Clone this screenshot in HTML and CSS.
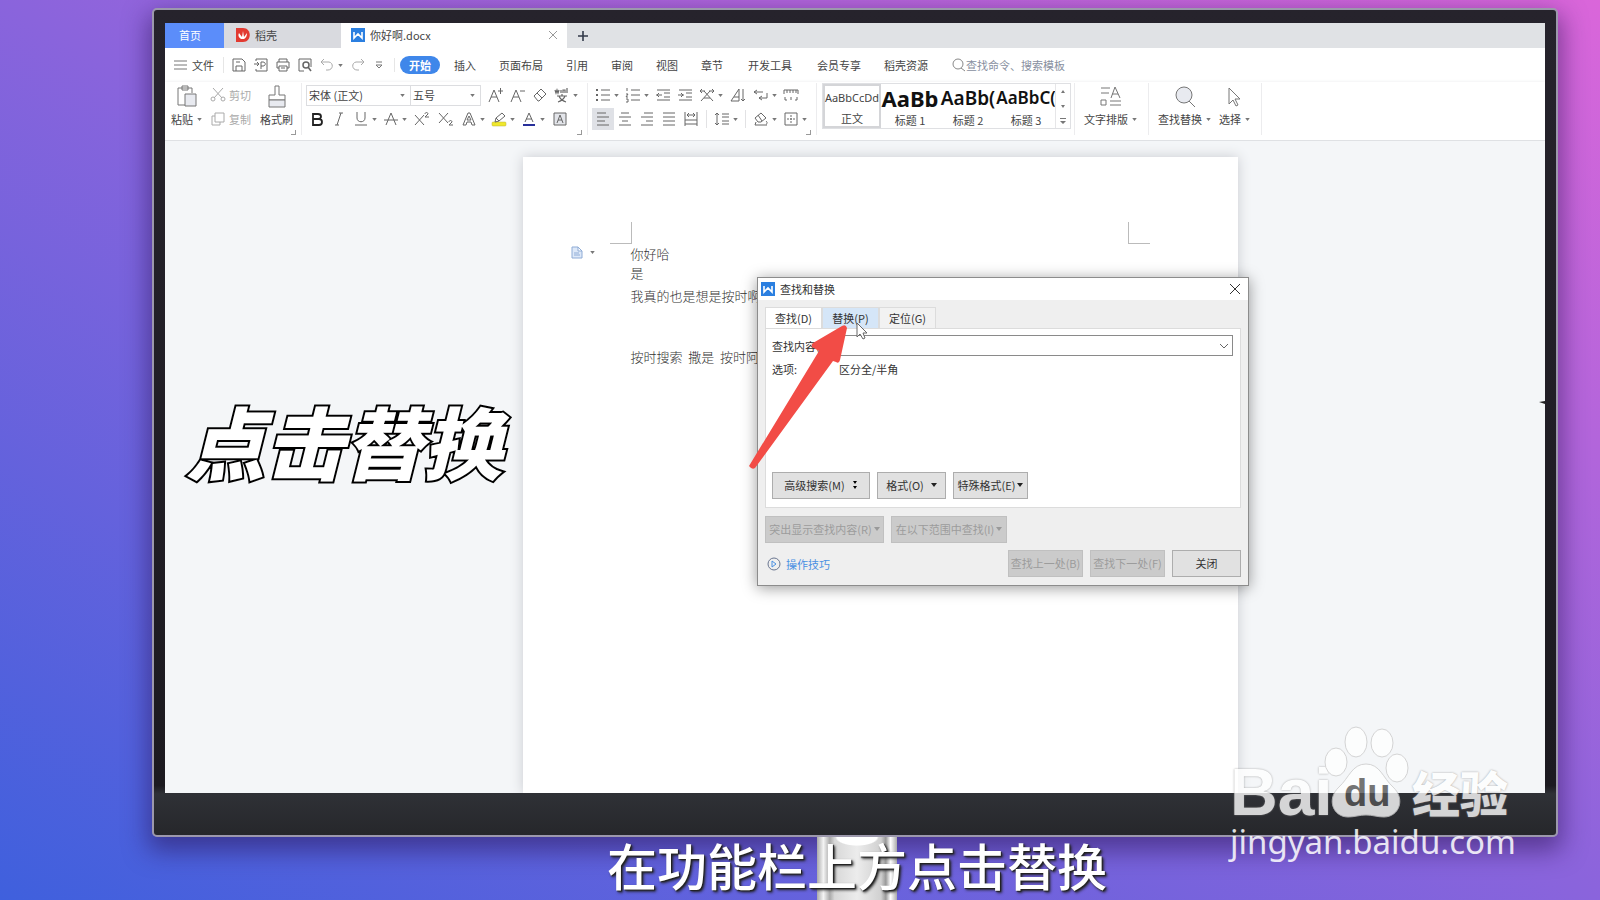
FILE: index.html
```html
<!DOCTYPE html>
<html lang="zh-CN">
<head>
<meta charset="utf-8">
<title>你好啊.docx</title>
<link rel="stylesheet" href="styles.css">
</head>
<body>
<svg class="defs" aria-hidden="true">
  <symbol id="caret" viewBox="0 0 6 4"><path d="M0 0h6L3 4z" fill="currentColor"/></symbol>
  <symbol id="wlogo" viewBox="0 0 14 14"><rect width="14" height="14" fill="#2b7fe0"/><path d="M3 4v6l4-4 4 4V4" fill="none" stroke="#fff" stroke-width="1.6"/></symbol>
</svg>

<main class="monitor">
  <div class="screen">
    <nav class="tabbar">
      <button class="tab home">首页</button>
      <button class="tab docer">
        <svg width="14" height="14" viewBox="0 0 14 14"><path d="M0 0h7c9 0 9 14 0 14H0z" fill="#e23a31"/><path d="M5 11C2 9 2 7 3 5l3 4 1-6 1 6 3-4c0 3-1 5-3 6z" fill="#fff"/></svg>
        稻壳</button>
      <div class="tab doc">
        <svg width="14" height="14"><use href="#wlogo"/></svg>
        <span>你好啊.docx</span>
        <button class="tab-close" aria-label="关闭标签"><svg width="10" height="10" viewBox="0 0 10 10"><path d="M1 1l8 8M9 1l-8 8" stroke="#999" fill="none"/></svg></button>
      </div>
      <button class="tab-add" aria-label="新建"><svg width="12" height="12" viewBox="0 0 12 12"><path d="M6 1v10M1 6h10" stroke="#333a4a" stroke-width="1.6"/></svg></button>
    </nav>

    <div class="menubar">
      <button class="file"><svg width="13" height="10" viewBox="0 0 13 10"><path d="M0 1h13M0 5h13M0 9h13" stroke="#777"/></svg>文件</button>
      <div class="quick">
        <button aria-label="保存"><svg class="ic" viewBox="0 0 14 14"><path d="M1 1h9l3 3v9H1zM4 13V8h6v5M4 4h4"/></svg></button>
        <button aria-label="输出为PDF"><svg class="ic" viewBox="0 0 14 14"><path d="M2 3V1h11v12H2v-2M0 6h5M3 4l2 2-2 2M7 11V4h2c3 0 3 4 0 4H7"/></svg></button>
        <button aria-label="打印"><svg class="ic" viewBox="0 0 14 14"><path d="M3 4V1h8v3M3 10H1V4h12v6h-2M3 8h8v5H3zM5 10h4"/></svg></button>
        <button aria-label="打印预览"><svg class="ic" viewBox="0 0 14 14"><path d="M6 13H1V1h12v8"/><circle cx="8" cy="7" r="3" stroke-width="1.5"/><path d="M10 9l3 4" stroke-width="1.5"/></svg></button>
        <button class="pair dim" aria-label="撤销"><svg class="ic" viewBox="0 0 14 14"><path d="M4 1L1 4l3 3M1 4h8c5 1 4 8-1 8H6"/></svg><svg class="cr"><use href="#caret"/></svg></button>
        <button class="dim" aria-label="恢复"><svg class="ic" viewBox="0 0 14 14"><path d="M10 1l3 3-3 3M13 4H5c-5 1-4 8 1 8h2"/></svg></button>
        <button class="custom" aria-label="自定义"><svg width="8" height="8" viewBox="0 0 8 8"><path d="M1 1h6M1 4h6L4 7z" fill="none" stroke="#777"/></svg></button>
      </div>
      <nav class="menus">
        <button class="current">开始</button><button>插入</button><button>页面布局</button><button>引用</button><button>审阅</button><button>视图</button><button>章节</button><button class="far">开发工具</button><button class="far">会员专享</button><button>稻壳资源</button>
      </nav>
      <label class="search"><svg width="14" height="14" viewBox="0 0 14 14" fill="none" stroke="#888"><circle cx="6" cy="6" r="5"/><path d="M9 10l4 3"/></svg><input type="text" placeholder="查找命令、搜索模板" aria-label="查找命令、搜索模板"></label>
    </div>

    <div class="ribbon">
      <section class="group clip">
        <button class="big"><svg width="22" height="24" viewBox="0 0 22 24" fill="none" stroke="#777"><path d="M9 20H2V3h14v5M6 1h6v4H6z"/><path d="M9 9h11v12H9z" fill="#e8eaf0"/></svg><span>粘贴<svg class="cr"><use href="#caret"/></svg></span></button>
        <div class="stack">
          <button class="dim"><svg class="ic" viewBox="0 0 14 14"><path d="M2 0l9 10M12 0L3 10"/><circle cx="2" cy="11" r="2"/><circle cx="12" cy="11" r="2"/></svg>剪切</button>
          <button class="dim"><svg class="ic" viewBox="0 0 14 14"><path d="M4 1h9v9H4zM4 4H1v9h8v-3"/></svg>复制</button>
        </div>
        <button class="big"><svg width="20" height="24" viewBox="0 0 20 24" fill="none" stroke="#777"><path d="M8 1h4v9h6v5H2v-5h6z"/><path d="M2 15h16v7H2z" fill="#e8eaf0"/></svg><span>格式刷</span></button>
        <i class="corner"></i>
      </section>

      <section class="group font">
        <div class="row">
          <div class="combo family"><select aria-label="字体"><option>宋体 (正文)</option></select><svg class="cr"><use href="#caret"/></svg></div>
          <div class="combo size"><select aria-label="字号"><option>五号</option></select><svg class="cr"><use href="#caret"/></svg></div>
          <button class="t" aria-label="增大字号"><svg class="ic" viewBox="0 0 14 14"><path d="M0 14L5 2l5 12M2 9h6M9 3h5M11.500 0v6"/></svg></button>
          <button class="t" aria-label="减小字号"><svg class="ic" viewBox="0 0 14 14"><path d="M0 14L5 2l5 12M2 9h6M9 3h5"/></svg></button>
          <button class="t" aria-label="清除格式"><svg class="ic" viewBox="0 0 14 14"><path d="M1 8l7-7 5 5-7 7H5zM4 5l5 5"/></svg></button>
          <button class="t pair" aria-label="拼音指南"><svg class="ic" viewBox="0 0 14 14"><path d="M0 2l1 3 1-3 1 3 1-3M6 2v3M8 5V2h2v3M12 0v5M2 8h10M7 6v2M4 8c1 3 4 5 7 6M10 8c-1 3-4 5-7 6" stroke-width="1.200"/></svg><svg class="cr"><use href="#caret"/></svg></button>
        </div>
        <div class="row">
          <button class="t" aria-label="加粗"><svg class="ic" viewBox="0 0 14 14"><path d="M3 2h5c4 0 4 5 0 5H3zM3 7h6c4 0 4 6 0 6H3z" stroke="#222" stroke-width="1.800"/></svg></button>
          <button class="t" aria-label="倾斜"><svg class="ic" viewBox="0 0 14 14"><path d="M7 1h4M3 13h4M9 1L5 13"/></svg></button>
          <button class="t pair" aria-label="下划线"><svg class="ic" viewBox="0 0 14 14"><path d="M3 0v6c0 5 8 5 8 0V0M1 13h12"/></svg><svg class="cr"><use href="#caret"/></svg></button>
          <button class="t pair" aria-label="删除线"><svg class="ic" viewBox="0 0 14 14"><path d="M2 13L7 1l5 12M0 8h14"/></svg><svg class="cr"><use href="#caret"/></svg></button>
          <button class="t w24" aria-label="上标"><svg class="ic" viewBox="0 0 14 14"><path d="M0 3l9 10M9 3L0 13M10 2c0-2 3-2 3 0L10 5h4"/></svg></button>
          <button class="t w24" aria-label="下标"><svg class="ic" viewBox="0 0 14 14"><path d="M0 1l9 10M9 1L0 11M10 10c0-2 3-2 3 0l-3 3h4"/></svg></button>
          <button class="t pair" aria-label="文字效果"><svg class="ic" viewBox="0 0 14 14"><path d="M1 13L6 1h2l5 12h-3l-1-3H5l-1 3zM5 8h4L7 4z"/></svg><svg class="cr"><use href="#caret"/></svg></button>
          <button class="t pair" aria-label="突出显示"><svg class="ic" viewBox="0 0 14 14"><rect y="10" width="14" height="4" rx="1" fill="#f0e82c" stroke="#b8b23a" stroke-width=".5"/><path d="M3 10l1-4 6-5 3 3-6 5zM4 6l3 3"/></svg><svg class="cr"><use href="#caret"/></svg></button>
          <button class="t pair" aria-label="字体颜色"><svg class="ic" viewBox="0 0 14 14"><path d="M3 10L7 1l4 9M4 7h6"/><path d="M1 13h12" stroke="#28309a" stroke-width="2"/></svg><svg class="cr"><use href="#caret"/></svg></button>
          <button class="t w24" aria-label="字符底纹"><svg class="ic" viewBox="0 0 14 14"><path d="M1 1h12v12H1z" fill="#e3e5ea"/><path d="M4 11l3-8 3 8M5 8h4"/></svg></button>
        </div>
        <i class="corner"></i>
      </section>

      <section class="group para">
        <div class="row">
          <button class="t pair" aria-label="项目符号"><svg class="ic" viewBox="0 0 14 14"><path d="M5 2h9M5 7h9M5 12h9"/><path d="M0 2h2M0 7h2M0 12h2" stroke-width="2"/></svg><svg class="cr"><use href="#caret"/></svg></button>
          <button class="t pair" aria-label="编号"><svg class="ic" viewBox="0 0 14 14"><path d="M5 2h9M5 7h9M5 12h9M1 0v3M0 6h2L0 9h2M0 11h2v3H0"/></svg><svg class="cr"><use href="#caret"/></svg></button>
          <button class="t" aria-label="减少缩进"><svg class="ic" viewBox="0 0 14 14"><path d="M1 2h13M8 5h6M8 9h6M1 12h13M0 7h6M3 5L1 7l2 2"/></svg></button>
          <button class="t" aria-label="增加缩进"><svg class="ic" viewBox="0 0 14 14"><path d="M1 2h13M8 5h6M8 9h6M1 12h13M0 7h6M3 5l2 2-2 2"/></svg></button>
          <button class="t pair" aria-label="中文版式"><svg class="ic" viewBox="0 0 14 14"><path d="M1 13L10 3M4 3l9 10M0 3h5M9 3h5M2 1L0 3l2 2M12 1l2 2-2 2M4 10h6"/></svg><svg class="cr"><use href="#caret"/></svg></button>
          <button class="t w24" aria-label="排序"><svg class="ic" viewBox="0 0 14 14"><path d="M0 13L8 1v12zM3 9h5M12 1v12M10 11l2 2 2-2"/></svg></button>
          <button class="t pair" aria-label="换行"><svg class="ic" viewBox="0 0 14 14"><path d="M0 4h9M3 2L0 4l3 2M13 5v5H5M8 8l-3 2 3 2"/></svg><svg class="cr"><use href="#caret"/></svg></button>
          <button class="t" aria-label="制表位"><svg class="ic" viewBox="0 0 14 14"><path d="M0 6V2h14v4M3 2v3M6 2v3M9 2v3M12 2v3M1 9v3h2M7 9v3M13 9v3h-2"/></svg></button>
        </div>
        <div class="row">
          <button class="t on" aria-label="左对齐"><svg class="ic" viewBox="0 0 14 14"><path d="M1 1h9M1 5h12M1 9h8M1 13h12"/></svg></button>
          <button class="t" aria-label="居中"><svg class="ic" viewBox="0 0 14 14"><path d="M3 1h8M1 5h12M4 9h6M1 13h12"/></svg></button>
          <button class="t" aria-label="右对齐"><svg class="ic" viewBox="0 0 14 14"><path d="M4 1h9M1 5h12M6 9h7M1 13h12"/></svg></button>
          <button class="t" aria-label="两端对齐"><svg class="ic" viewBox="0 0 14 14"><path d="M1 1h12M1 5h12M1 9h12M1 13h12"/></svg></button>
          <button class="t" aria-label="分散对齐"><svg class="ic" viewBox="0 0 14 14"><path d="M1 0v14M13 0v14M1 8h12M1 12h12M3 3h8M5 1L3 3l2 2M9 1l2 2-2 2"/></svg></button>
          <i class="sep"></i>
          <button class="t pair" aria-label="行距"><svg class="ic" viewBox="0 0 14 14"><path d="M2 1v12M0 3l2-2 2 2M0 11l2 2 2-2M7 2h7M7 5h7M7 9h7M7 12h7"/></svg><svg class="cr"><use href="#caret"/></svg></button>
          <i class="sep"></i>
          <button class="t pair" aria-label="底纹颜色"><svg class="ic" viewBox="0 0 14 14"><path d="M1 6l6-5 5 5-5 4H4zM1 13h12M2 10l-1 3M12 9c2 2 1 3 0 3"/><path d="M4 3l4 6"/></svg><svg class="cr"><use href="#caret"/></svg></button>
          <button class="t pair" aria-label="边框"><svg class="ic" viewBox="0 0 14 14"><path d="M1 1h12v12H1z"/><path d="M7 3v9M3 7h9" stroke-dasharray="2 1"/></svg><svg class="cr"><use href="#caret"/></svg></button>
        </div>
        <i class="corner"></i>
      </section>

      <section class="group styles">
        <div class="gallery">
          <button class="style sel"><b class="s0">AaBbCcDd</b><span>正文</span></button>
          <button class="style"><b class="s1">AaBb</b><span>标题 1</span></button>
          <button class="style"><b class="s2">AaBb(</b><span>标题 2</span></button>
          <button class="style"><b class="s3">AaBbC(</b><span>标题 3</span></button>
          <div class="spin">
            <button aria-label="上"><svg width="4" height="3" viewBox="0 0 4 3"><path d="M0 3h4L2 0z" fill="#777"/></svg></button>
            <button aria-label="下"><svg width="4" height="3" viewBox="0 0 4 3"><path d="M0 0h4L2 3z" fill="#777"/></svg></button>
            <button aria-label="更多"><svg width="6" height="6" viewBox="0 0 6 6"><path d="M0 0h6v1H0zM0 3h6L3 6z" fill="#777"/></svg></button>
          </div>
        </div>
      </section>

      <section class="group end">
        <button class="big"><svg width="22" height="24" viewBox="0 0 22 24" fill="none" stroke="#777"><path d="M1 3h9M1 8h8M11 13l4-11 5 11M12 9h6M1 15h5v5H1zM10 16h11M10 20h11"/></svg><span>文字排版<svg class="cr"><use href="#caret"/></svg></span></button>
      </section>
      <section class="group end">
        <button class="big"><svg width="22" height="24" viewBox="0 0 22 24" fill="none" stroke="#777"><circle cx="10" cy="10" r="8" fill="#e8eaf0"/><path d="M15 16l6 6"/></svg><span>查找替换<svg class="cr"><use href="#caret"/></svg></span></button>
        <button class="big"><svg width="22" height="24" viewBox="0 0 22 24" fill="none" stroke="#777"><path d="M5 3v16l4-4 3 6 2-1-3-6h5z"/></svg><span>选择<svg class="cr"><use href="#caret"/></svg></span></button>
      </section>
    </div>

    <div class="canvas">
      <h1 class="callout">点击替换</h1>
      <article class="page">
        <div class="marks"><i class="m-left"></i><i class="m-right"></i></div>
        <div class="content">
          <button class="para-tool" aria-label="段落布局"><svg width="12" height="13" viewBox="0 0 12 13" fill="#dde8f8" stroke="#8facd6"><path d="M1 1h6l4 4v7H1zM7 1v4h4M3 7h5M3 9h6"/></svg><svg class="cr"><use href="#caret"/></svg></button>
          <div class="text">
            <p>你好哈</p>
            <p>是</p>
            <p class="spaced">我真的也是想是按时啊</p>
            <p class="gap">按时搜索  撒是  按时阿</p>
          </div>
        </div>
      </article>
      <svg class="edge" width="6" height="3" viewBox="0 0 6 3"><path d="M0 1l6-1v3z" fill="#222"/></svg>
    </div>

    <section class="dialog" role="dialog" aria-label="查找和替换">
      <header><svg width="14" height="14"><use href="#wlogo"/></svg><span>查找和替换</span><button aria-label="关闭窗口"><svg width="10" height="10" viewBox="0 0 10 10"><path d="M0 0l10 10M10 0L0 10" stroke="#333"/></svg></button></header>
      <div class="dialog-body">
        <div class="dtabs"><button class="active">查找(D)</button><button class="hover">替换(P)</button><button>定位(G)</button></div>
        <div class="panel">
          <div class="field"><label for="q">查找内容(N):</label><div class="qbox"><input id="q" type="text"><svg width="8" height="6" viewBox="0 0 8 6"><path d="M0 1l4 4 4-4" fill="none" stroke="#666"/></svg></div></div>
          <div class="field"><span class="name">选项:</span><span>区分全/半角</span></div>
          <div class="btns">
            <button class="btn w98">高级搜索(M)<svg width="6" height="8" viewBox="0 0 6 8"><path d="M1 0h4L3 3zM1 5h4L3 8z"/></svg></button>
            <button class="btn w69">格式(O)<svg class="cr"><use href="#caret"/></svg></button>
            <button class="btn w75">特殊格式(E)<svg class="cr"><use href="#caret"/></svg></button>
          </div>
        </div>
        <div class="btns lower">
          <button class="btn w119" disabled>突出显示查找内容(R)<svg class="cr"><use href="#caret"/></svg></button>
          <button class="btn w116" disabled>在以下范围中查找(I)<svg class="cr"><use href="#caret"/></svg></button>
        </div>
        <footer>
          <a href="#tips"><svg width="14" height="14" viewBox="0 0 14 14" fill="none"><circle cx="7" cy="7" r="6" stroke="#6a7690"/><path d="M5 4l4 3-4 3z" stroke="#4a90e2"/></svg>操作技巧</a>
          <button class="btn w75" disabled>查找上一处(B)</button>
          <button class="btn w75" disabled>查找下一处(F)</button>
          <button class="btn w69">关闭</button>
        </footer>
      </div>
      <svg class="arrow" width="126" height="150" viewBox="0 0 126 150">
        <path d="M3 143L73 28L66 24Q65 22 67 20L96 3Q100 1 101 5L94 37Q93 41 90 39L87 38L9 145Q6 147 3 143Z" fill="#f24c46"/>
        <path d="M111 0v14l3-3 3 5 2-1-2-5h4z" fill="#fff" stroke="#666"/>
      </svg>
    </section>
  </div>
</main>

<footer class="desk">
  <div class="stand"></div>
  <p class="caption">在功能栏上方点击替换</p>
</footer>

<aside class="watermark">
  <div class="brand">
    <span class="bai">Bai</span>
    <span class="paw">
      <svg width="86" height="92" viewBox="0 0 86 92"><g fill="#fff" stroke="#ccc"><ellipse cx="12" cy="36" rx="11" ry="14"/><ellipse cx="32" cy="16" rx="11" ry="15"/><ellipse cx="58" cy="17" rx="11" ry="14"/><ellipse cx="73" cy="42" rx="11" ry="14"/><path d="M42 38c-14 0-17 14-27 23-13 12-6 30 9 30 7 0 11-2 18-2s11 2 18 2c15 0 22-18 9-30-10-9-13-23-27-23z"/></g></svg>
      <span class="du">du</span>
    </span>
    <span class="jy">经验</span>
  </div>
  <div class="url">jingyan.baidu.com</div>
</aside>
</body>
</html>
```

FILE: styles.css
```css
* { box-sizing: border-box; }

body {
  margin: 0;
  min-height: 100vh;
  display: flex;
  flex-direction: column;
  position: relative;
  overflow: hidden;
  font: 11px/16px "Noto Sans CJK SC", "Noto Sans", sans-serif;
  color: #444;
  background: linear-gradient(to top right, #3f60dd, #8a64dc 50%, #da66da);
}

button, input, select { font: inherit; color: inherit; border: 0; background: none; padding: 0; margin: 0; }
p, h1 { margin: 0; }
i { display: block; }
svg { flex: none; display: block; }
.defs { position: absolute; width: 0; height: 0; }
.ic { width: 14px; height: 14px; fill: none; stroke: #666; overflow: visible; }
.cr { width: 5px; height: 3px; color: #777; }
.dim { color: #aaa; }
.dim .ic { stroke: #aaa; }

.monitor {
  flex: 1;
  display: flex;
  margin: 8px 42px 0 152px;
  padding: 13px 11px 42px 11px;
  border: 2px solid #9c98ac;
  border-radius: 5px;
  background: linear-gradient(#26232c, #1c1a20 94%, #2f3136 95%, #26272b);
  box-shadow: 0 10px 24px 4px rgba(40, 16, 80, .5);
}

.screen {
  flex: 1;
  display: flex;
  flex-direction: column;
  min-width: 0;
  position: relative;
  overflow: hidden;
  background: #fff;
}

/* window tabs */
.tabbar { display: flex; height: 25px; background: #e0e2e5; }
.tab { display: flex; align-items: center; gap: 5px; padding-bottom: 2px; }
.home { width: 59px; padding-left: 14px; background: #5b8dfa; color: #fff; }
.docer { width: 117px; padding-left: 12px; background: #d9dadf; }
.doc { width: 226px; padding-right: 9px; padding-left: 10px; background: #fff; }
.tab-close { margin-left: auto; }
.tab-add { padding: 0 10px; }

/* menus */
.menubar { display: flex; align-items: center; height: 34px; }
.file { display: flex; align-items: center; gap: 5px; padding: 0 9px; border-right: 1px solid #e6e6e6; }
.quick { display: flex; align-items: center; gap: 8px; padding: 0 9px 0 8px; border-right: 1px solid #e6e6e6; }
.quick .pair { display: flex; align-items: center; gap: 4px; }
.quick .custom { padding: 0 2px; }
.menus { display: flex; align-items: center; gap: 23px; margin-left: 5px; }
.menus .current { padding: 1px 9px; margin-right: -9px; border-radius: 9px; background: #3f87ea; color: #fff; font-weight: 700; }
.menus .far { margin-left: 2px; }
.search { display: flex; align-items: center; margin-left: 24px; color: #888fa0; }
.search input { width: 120px; }
.search input::placeholder { color: #888fa0; opacity: 1; }

/* ribbon */
.ribbon { display: flex; height: 59px; padding-top: 1px; border-bottom: 1px solid #dfe1e4; box-shadow: 0 1px 4px #dcdee2; position: relative; }
.group { position: relative; display: flex; padding: 0 4px; height: 52px; border-right: 1px solid #ececee; }
.font, .para { flex-direction: column; }
.row { display: flex; align-items: center; height: 24px; }
.corner { position: absolute; right: 5px; bottom: 0; width: 5px; height: 5px; border: solid #999; border-width: 0 1px 1px 0; }
.big { display: flex; flex-direction: column; align-items: center; gap: 2px; padding-top: 2px; }
.big span { display: flex; align-items: center; gap: 4px; }
.clip { gap: 9px; padding: 0 8px 0 6px; }
.stack { display: flex; flex-direction: column; }
.stack button { display: flex; align-items: center; gap: 4px; height: 24px; }
.combo { display: flex; align-items: center; height: 21px; padding-right: 5px; border: 1px solid #dcdde0; }
.combo select { flex: 1; appearance: none; min-width: 0; padding-left: 2px; }
.family { width: 105px; }
.size { width: 71px; margin: 0 4px 0 -1px; }
.t { display: flex; align-items: center; justify-content: center; width: 22px; height: 22px; }
.t.w24 { width: 24px; }
.t.pair { width: 30px; justify-content: flex-start; gap: 4px; padding-left: 4px; }
.on { background: #dfe1e6; }
.sep { width: 1px; height: 18px; margin: 0 4px; background: #e2e2e4; }
.font { padding-right: 6px; }
.para { padding-right: 6px; }

.styles { padding: 0 3px 0 5px; }
.gallery { display: flex; height: 46px; border: 1px solid #dfe0e3; }
.style { display: flex; flex-direction: column; align-items: center; width: 58px; }
.style b { display: flex; align-items: center; height: 28px; white-space: nowrap; color: #111; font-family: "Noto Sans", sans-serif; font-weight: 600; }
.style.sel { border: 2px solid #d4d5d8; }
.style.sel b { height: 26px; }
.style .s0 { font-size: 11px; font-weight: 400; color: #444; }
.style .s1 { font-size: 22px; font-weight: 700; }
.s2 { font-size: 19px; }
.s3 { font-size: 17px; }
.spin { display: flex; flex-direction: column; width: 15px; border-left: 1px solid #e6e6e8; }
.spin button { flex: 1; display: flex; align-items: center; justify-content: center; }
.end { padding: 0 11px 0 9px; gap: 8px; }

/* document area */
.canvas { flex: 1; display: flex; justify-content: center; padding: 16px 0 0 50px; background: #f4f6f8; position: relative; }
.page { width: 715px; background: #fff; box-shadow: 0 0 12px #c9cbd0; }
.marks { display: flex; justify-content: space-between; padding: 65px 88px 0 87px; }
.marks i { width: 22px; height: 22px; border: solid #bbb; }
.marks .m-left { border-width: 0 1px 1px 0; }
.marks .m-right { border-width: 0 0 1px 1px; }
.content { display: flex; align-items: flex-start; padding-left: 48px; }
.para-tool { display: flex; align-items: center; gap: 7px; width: 60px; height: 16px; }
.text { font-size: 13px; line-height: 19px; font-weight: 300; color: #333; }
.text p { white-space: pre; }
.text .spaced { margin-top: 4px; }
.text .gap { margin-top: 42px; }
.edge { position: absolute; right: 0; top: 260px; }

.callout {
  position: absolute;
  left: 21px;
  top: 241px;
  font: italic 900 79px/116px "Noto Sans CJK SC", sans-serif;
  color: #fff;
  -webkit-text-stroke: 4px #000;
  paint-order: stroke fill;
  white-space: nowrap;
}

/* find and replace */
.dialog { position: absolute; left: 592px; top: 254px; width: 492px; border: 1px solid #8c8c8c; background: #efefef; box-shadow: 0 2px 14px rgba(0, 0, 0, .4); color: #333; }
.dialog header { display: flex; align-items: center; gap: 5px; height: 22px; padding: 0 8px 1px 3px; background: #fff; }
.dialog header button { margin-left: auto; }
.dialog-body { padding: 7px 7px 8px; }
.dtabs { display: flex; height: 21px; }
.dtabs button { width: 57px; border: 1px solid #dcdcdc; border-bottom: 0; background: #f2f2f2; }
.dtabs .active { background: #fff; }
.dtabs .hover { background: #d5e6f8; }
.panel { padding: 6px 7px 8px 6px; border: 1px solid #dcdcdc; background: #fff; }
.field { display: flex; align-items: center; margin-bottom: 5px; }
.field label, .field .name { width: 67px; }
.qbox { flex: 1; display: flex; align-items: center; height: 21px; padding-right: 4px; border: 1px solid #8a8a8a; }
.qbox input { flex: 1; outline: 0; min-width: 0; }
.panel .btns { margin-top: 95px; }
.btns { display: flex; gap: 7px; }
.btn { display: flex; align-items: center; justify-content: center; gap: 7px; height: 27px; padding-bottom: 1px; border: 1px solid #adadad; background: #e1e1e1; white-space: nowrap; }
.btn .cr { color: #222; width: 6px; height: 4px; }
.btn:disabled { gap: 2px; background: #cbcbcb; border-color: #c0c0c0; color: #9c9c9c; }
.btn:disabled .cr { color: #999; }
.w98 { width: 98px; }
.w69 { width: 69px; }
.w75 { width: 75px; gap: 2px; }
.w119 { width: 119px; }
.w116 { width: 116px; }
.lower { margin-top: 8px; }
.dialog footer { display: flex; align-items: center; gap: 7px; margin-top: 7px; }
.dialog a { display: flex; align-items: center; gap: 5px; margin-right: auto; padding-left: 2px; color: #4a90e2; text-decoration: none; }
.arrow { position: absolute; left: -12px; top: 45px; }

/* desk below the monitor */
.desk { position: relative; display: flex; justify-content: center; height: 63px; padding-left: 114px; }
.stand { width: 80px; background: radial-gradient(ellipse 22px 9px at 50% 0, #fff 90%, transparent), linear-gradient(90deg, #aaa, #f4f4f4 8%, #aaa 16%, #d8d8d8 22%, #ececec 50%, #d0d0d0 80%, #999 86%, #fff 92%, #aaa); }
.caption {
  position: absolute;
  left: 607px;
  top: -9px;
  font-size: 50px;
  line-height: 72px;
  font-weight: 500;
  color: #fff;
  white-space: nowrap;
  text-shadow: 2px 2px 3px #222, 1px 1px 1px #222;
}

/* watermark */
.watermark { position: absolute; right: 84px; bottom: 34px; width: 286px; color: #fff; }
.brand { display: flex; align-items: flex-end; height: 92px; opacity: .8; text-shadow: 0 0 2px #888; }
.bai { font: 700 66px/52px "Liberation Sans", sans-serif; width: 94px; }
.paw { position: relative; width: 88px; }
.du { position: absolute; left: 20px; bottom: 6px; font: 700 38px/38px "Liberation Sans", sans-serif; color: #555; text-shadow: none; }
.jy { font-size: 48px; line-height: 54px; font-weight: 900; }
.url { font: 33px/48px "Noto Sans", sans-serif; opacity: .85; white-space: nowrap; }
```
